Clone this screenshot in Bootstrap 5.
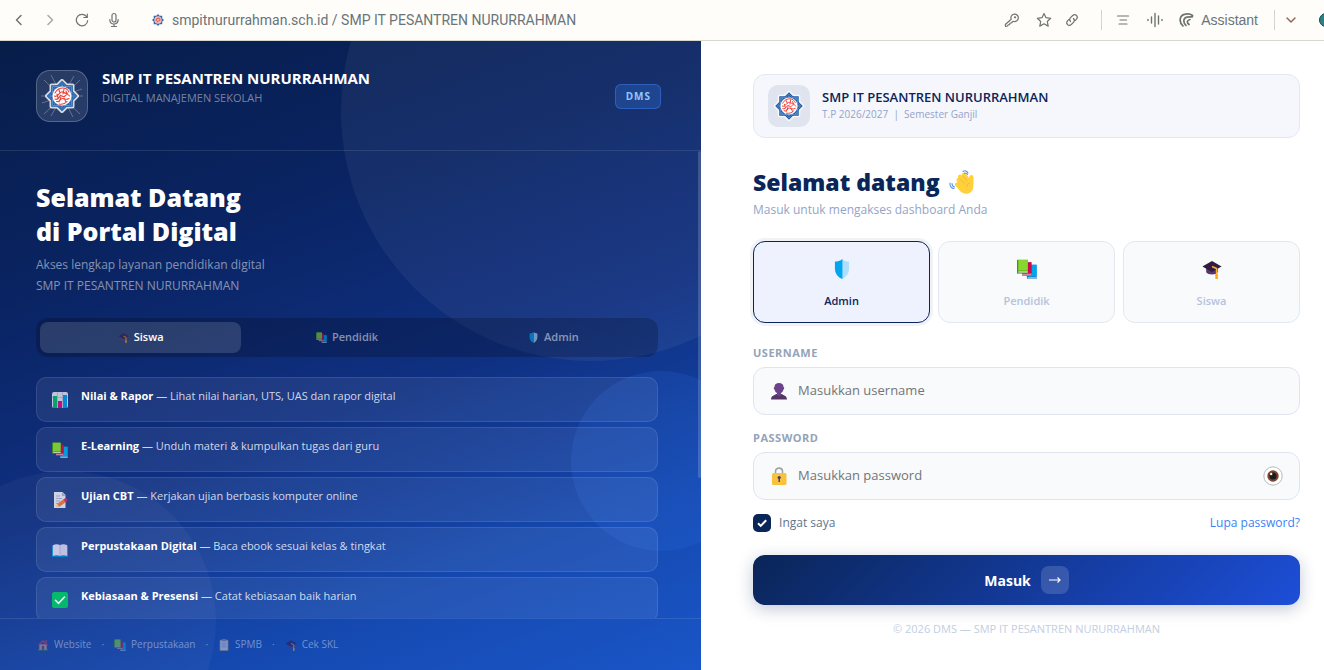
<!DOCTYPE html>
<html lang="id">
<head>
<meta charset="utf-8">
<meta name="viewport" content="width=device-width, initial-scale=1">
<title>SMP IT PESANTREN NURURRAHMAN</title>
<link href="https://cdn.jsdelivr.net/npm/bootstrap@5.3.0/dist/css/bootstrap.min.css" rel="stylesheet">
<style>
  body { font-family: "Open Sans", "Noto Sans", sans-serif; font-size: 13px; color: #0a2558; background: #fff; }
  svg { display: block; flex: none; }
  button { font-family: inherit; }

  /* browser bar */
  .topbar { height: 41px; background: #fffdf9; border-bottom: 1px solid #d9d8d0; color: #68747a; font: 14px/20px Roboto, sans-serif; padding: 0 0 0 11px; overflow: hidden; }
  .topbar svg { fill: none; stroke: #6d7472; stroke-width: 1.2; stroke-linecap: round; stroke-linejoin: round; }
  .bar-btn { border: 0; background: none; padding: 0; color: inherit; }
  .address { border: 0; background: none; padding: 0; color: inherit; outline: 0; min-width: 0; }
  .rule { width: 1px; height: 20px; background: #d5d4cd; }
  .assistant { font-family: "Liberation Sans", sans-serif; }
  .avatar { width: 14px; height: 14px; border-radius: 50%; background: #2b8188; border: 1px solid #16484e; margin-right: -9px; }

  /* left panel */
  .hero { width: 52.95%; background: linear-gradient(160deg, #071d49 0%, #0a2463 30%, #0f2f80 55%, #1549b0 80%, #1a56c8 100%); color: #fff; }
  .bubble { position: absolute; border-radius: 50%; pointer-events: none; }
  .bubble-a { width: 500px; height: 500px; top: -180px; right: -140px; background: rgba(255,255,255,.05); }
  .bubble-b { width: 300px; height: 300px; bottom: -101px; left: -84px; background: rgba(255,255,255,.035); }
  .bubble-c { width: 180px; height: 180px; bottom: 119px; right: -50px; background: rgba(59,130,246,.14); }
  .hero-head { padding: 29px 40px 28px 36px; gap: 14px; border-bottom: 1px solid rgba(255,255,255,.1); }
  .crest { width: 52px; height: 52px; border-radius: 14px; background: rgba(255,255,255,.13); border: 1px solid rgba(255,255,255,.22); }
  .school { font-size: 15px; line-height: 17px; font-weight: 700; }
  .tagline { font-size: 11px; line-height: 21px; color: rgba(255,255,255,.45); }
  .dms { font-size: 10px; line-height: 15px; font-weight: 700; letter-spacing: 1px; color: #93c5fd; padding: 4px 9px 4px 10px; border-radius: 6px; background: rgba(59,130,246,.25); border: 1px solid rgba(59,130,246,.45); }
  .hero-body { padding: 29px 43px 0 36px; }
  .thumb { position: absolute; top: 0; right: 0; width: 3px; height: 70%; background: rgba(255,255,255,.17); border-radius: 2px; }
  .hero-title { font-size: 25px; line-height: 34px; font-weight: 800; margin: 0 0 6px; }
  .hero-sub { font-size: 12px; line-height: 21px; color: rgba(255,255,255,.5); margin: 0 0 22px; }
  .switch { background: rgba(0,0,0,.2); border-radius: 12px; padding: 4px; gap: 5px; }
  .switch button { flex: 1 1 0; height: 31px; border: 0; border-radius: 8px; background: none; color: rgba(255,255,255,.5); font-size: 11px; font-weight: 600; gap: 5px; }
  .switch svg { opacity: .6; }
  .switch .on { background: rgba(255,255,255,.14); color: #fff; }
  .feature { height: 45px; border: 1px solid rgba(255,255,255,.1); background: rgba(255,255,255,.07); border-radius: 10px; padding: 9px 15px; gap: 13px; font-size: 11px; line-height: 18px; color: rgba(255,255,255,.8); }
  .feature b { font-weight: 700; color: #fff; }
  .feature svg { margin-top: 5px; opacity: .9; }
  .hero-foot { height: 52px; border-top: 1px solid rgba(255,255,255,.1); padding: 0 37px; gap: 10px; font-size: 10px; color: rgba(255,255,255,.4); }
  .hero-foot a { color: inherit; text-decoration: none; gap: 5px; }
  .hero-foot svg { opacity: .5; }

  /* right panel */
  .login { padding: 16px 24px 16px 52px; }
  .info { padding: 10px 14px; gap: 12px; border: 1px solid #e2e8f4; border-radius: 12px; background: #f5f7fd; }
  .info-crest { width: 42px; height: 42px; border-radius: 10px; background: #dfe4ef; }
  .info-name { font-size: 13px; line-height: 17px; font-weight: 600; }
  .info-term { font-size: 10px; line-height: 17px; color: #94a3c8; white-space: pre; }
  .hello { font-size: 23px; line-height: 32px; font-weight: 800; margin: 28px 0 2px; gap: 9px; }
  .lead-in { font-size: 12px; line-height: 20px; color: #94a3c8; margin: 0 0 21px; }
  .role { flex: 1 1 0; height: 82px; border: 1px solid #e2e8f0; border-radius: 12px; background: #f8fafc; color: #b4c2de; font-size: 11px; line-height: 16px; font-weight: 600; gap: 14px; padding: 4px 0 0; }
  .role.on { border-color: #0a2558; background: #eef2ff; color: #0a2558; box-shadow: 0 0 0 3px rgba(10,37,88,.06); }
  .caption { font-size: 11px; line-height: 17px; font-weight: 700; letter-spacing: .5px; color: #94a3b8; margin: 0 0 6px; }
  .field { height: 48px; border: 1px solid #dfe5f0; border-radius: 12px; background: #f8fafc; padding: 0 16px; gap: 10px; }
  .field input { flex: 1 1 0; min-width: 0; border: 0; background: none; outline: 0; padding: 0; font-size: 13px; color: #0a2558; }
  .field input::placeholder { color: #757575; opacity: 1; }
  .tick { appearance: none; width: 18px; height: 18px; margin: 0; border-radius: 5px; background: #0a2558 url("data:image/svg+xml,%3Csvg xmlns='http://www.w3.org/2000/svg' viewBox='0 0 18 18'%3E%3Cpath d='M5 9.200l2.700 2.700L13.200 6.200' fill='none' stroke='white' stroke-width='2'/%3E%3C/svg%3E"); }
  .remember { font-size: 12px; line-height: 20px; margin-top: 13px; color: #64748b; }
  .remember a { color: #3b82f6; text-decoration: none; }
  .submit { height: 50px; border: 0; border-radius: 12px; margin-top: 22px; color: #fff; font-size: 14px; font-weight: 700; gap: 10px; background: linear-gradient(135deg, #0a2558, #1d4ed8); box-shadow: 0 4px 16px rgba(10,37,88,.25); }
  .arrow { width: 28px; height: 28px; border-radius: 8px; background: rgba(255,255,255,.15); }
  .legal { font-size: 11px; line-height: 16px; color: #c3cee3; margin: 16px 0 0; }
  @media (max-width: 900px) { .hero { display: none !important; } .login { padding-left: 24px; } }
</style>
</head>
<body class="vh-100 d-flex flex-column overflow-hidden">

<svg width="0" height="0" class="position-absolute" aria-hidden="true">
  <symbol id="crest" viewBox="0 0 40 40">
    <path fill="#fff" stroke="#fff" stroke-width="4" stroke-linejoin="round" opacity=".8" d="M9.500 9.500h21v21h-21zM20 5l15 15-15 15L5 20z"/>
    <path fill="#fff" stroke="#1d5aa6" stroke-width="2.600" d="M20 6.500 33.500 20 20 33.500 6.500 20z"/>
    <path fill="none" stroke="#1d5aa6" stroke-width="2.600" d="M10.500 10.500h19v19h-19z"/>
    <path fill="none" stroke="#8fb6df" stroke-width=".5" d="M20 6.500 33.500 20 20 33.500 6.500 20zM10.500 10.500h19v19h-19z"/>
    <circle cx="20" cy="20" r="9.500" fill="#fff"/>
    <g fill="none" stroke="#ee4038" stroke-width="1.100" stroke-linecap="round">
      <path d="M13 17c2-4 5-5 8-5s5 2 6 4M12.500 20c3 2 4-3 7-4s3 3 6 1M13 23c2 1 4-1 5-3s3 2 5 0 3-2 4.500 0M14.500 25.500c3 1 4-3 6-3s3 2 6.500 0M17 28c3 .5 6 0 8-2.500M17 14l1 3M22 13l-1 5M24 15l1 3M19 21l-2 5M22 22l2 4M15 18l1 4"/>
    </g>
  </symbol>
  <symbol id="cap" viewBox="0 0 24 24">
    <path fill="#5b3570" d="M5 10h14v6c-2.500 3.500-11.500 3.500-14 0z"/>
    <path fill="#321b41" d="M12 2.500 23.500 9 12 15.500.5 9z"/>
    <path d="M12 9l5.500 2.500V22" fill="none" stroke="#ffb02e" stroke-width="1.800"/><path fill="#fcaa20" d="M16 18h3v6h-3z"/>
  </symbol>
  <symbol id="books" viewBox="0 0 24 24">
    <path fill="#0074ba" d="M11 7h12.500v17H12z"/><path fill="#00a6ed" d="M14 7h9.500v14H14z"/><path fill="#83b7d5" d="M12.500 21.500h11V24h-11z"/>
    <path fill="#9c2258" d="M6 4h11v16H6z"/><path fill="#ca0b4a" d="M8 4h9.500v13H8z"/><path fill="#d2879f" d="M6 17.500h11V20H6z"/>
    <path fill="#44911b" d="M0 1h13v16.500H0z"/><path fill="#86d72f" d="M1.500 1H13v13H1.500z"/><path fill="#dce9de" d="M1.500 14.800H13v1.500H1.500z"/>
  </symbol>
  <symbol id="shield" viewBox="0 0 24 24">
    <path fill="#b0deff" d="M12 0c2.500 2.500 5.500 3 8.500 3v8c0 6-3 10.500-8.500 13z"/><path fill="#00a6ed" d="M12.500 0C10 2.500 6.500 3 3.500 3v8c0 6 3 10.500 9 13z"/>
  </symbol>
  <symbol id="chart" viewBox="0 0 16 16">
    <rect width="16" height="16" rx="2" fill="#d3d3e4"/><path stroke="#a6a6c2" stroke-width=".7" d="M0 5.500h16M5.500 0v16M10.500 0v16"/>
    <path fill="#00b26b" d="M1 4h4v12H1z"/><path fill="#ca0b8a" d="M6 9h4v7H6z"/><path fill="#0093e0" d="M11 3h4v13h-4z"/>
  </symbol>
  <symbol id="memo" viewBox="0 0 16 16">
    <path fill="#e1e2f0" d="M2 0h8.500l3 3v13H2z"/><path fill="#a9a9c6" d="M10 0v4h3.500z"/><path stroke="#a9a9c6" d="M4 4h4M4 6.500h6M4 9h4M4 11.500h2"/>
    <path stroke="#e87a38" stroke-width="3.400" d="M6 13.500 13 8.500"/><path stroke="#d82a68" stroke-width="3.400" d="m12.500 8.800 2.300-1.800"/><path fill="#fbc86b" d="m5 11.500 2 3L4 15z"/>
  </symbol>
  <symbol id="open-book" viewBox="0 0 16 16">
    <path fill="#0084ce" d="M0 4h16v11H0z"/><path fill="#d8d6ee" d="M.8 3.200C3 2 6 2 8 3v11c-2-1-5-1-7.200 0z"/><path fill="#cfcde9" d="M15.200 3.200C13 2 10 2 8 3v11c2-1 5-1 7.200 0z"/><path stroke="#a9a7ca" stroke-width=".8" d="M8 3v11"/>
  </symbol>
  <symbol id="done" viewBox="0 0 16 16">
    <rect width="16" height="16" rx="2" fill="#00c567"/><path fill="none" stroke="#fff" stroke-width="1.600" stroke-linecap="round" d="m3.500 8.300 3 3 6-6.300"/>
  </symbol>
  <symbol id="home" viewBox="0 0 16 16">
    <path fill="#3d8b3a" d="M1 13.500h14V15.500H1z"/><path fill="#d8a79a" d="M3 7h10v7.500H3z"/><path fill="#d93f55" d="M8 1 1 8l1.500 1L8 4l5.500 5L15 8z"/><path fill="#d93f55" d="M11 1.500h2.500v4L11 3z"/><path fill="#7b4b52" d="M6.500 9h3v5.500h-3z"/>
  </symbol>
  <symbol id="clip" viewBox="0 0 16 16">
    <path fill="#a5805f" d="M2 1h12v15H2z"/><path fill="#e4e4f2" d="M3 2h10v13H3z"/><path fill="#9494ad" d="M5.500 0h5v3h-5z"/><path stroke="#a6a6c2" d="M5 5.500h6M5 8h6M5 10.500h6"/>
  </symbol>
</svg>

<header class="topbar d-flex align-items-center flex-shrink-0">
  <button class="bar-btn" aria-label="Kembali"><svg width="16" height="16"><path stroke-width="1.500" d="M10 3.500 5.500 8l4.500 4.500"/></svg></button>
  <button class="bar-btn" style="margin-left:15px" aria-label="Maju"><svg width="16" height="16" opacity=".6"><path stroke-width="1.500" d="M6 3.500 10.500 8 6 12.500"/></svg></button>
  <button class="bar-btn" style="margin-left:16px" aria-label="Muat ulang"><svg width="16" height="16"><path d="M12.800 5A5.700 5.700 0 1 0 13.700 8.500M13.300 2v3.500H9.800"/></svg></button>
  <button class="bar-btn" style="margin-left:16px" aria-label="Suara"><svg width="16" height="16"><rect x="6" y="1.500" width="4" height="8.500" rx="2"/><path d="M3.800 7.500c0 6 8.400 6 8.400 0M8 12v2.500M5.500 14.500h5"/></svg></button>
  <svg width="12" height="12" viewBox="0 0 12 12" style="margin-left:30px"><path stroke="none" fill="#2b69b0" d="M6 0 7.500 1.700 10.200 1.700 10.300 4.400 12 6 10.300 7.600 10.200 10.300 7.600 10.300 6 12 4.400 10.300 1.700 10.300 1.700 7.600 0 6 1.700 4.400 1.700 1.700 4.400 1.700z"/><circle cx="6" cy="6" r="3.700" fill="#f4c3be" stroke="none"/><path stroke="#e85c52" d="M4 6.500C5 3 7 4 8 5M5 8c1-2 2 0 3-2"/></svg>
  <input class="address flex-grow-1" style="margin-left:8px" aria-label="Alamat" readonly value="smpitnururrahman.sch.id / SMP IT PESANTREN NURURRAHMAN">
  <button class="bar-btn" aria-label="Kata sandi"><svg width="16" height="16"><path d="M7.200 7.300a3.700 3.700 0 1 1 2 2L7.500 10.800 6 11l-.3 1.500-1.500.3L3.500 14l-2 .300-.2-1.800z"/><circle cx="11" cy="5.300" r=".5"/></svg></button>
  <button class="bar-btn ms-3" aria-label="Favorit"><svg width="16" height="16"><path d="m8 1.500 2 4.200 4.700.6-3.400 3.200.9 4.600L8 11.800l-4.200 2.300.9-4.600L1.300 6.300 6 5.700z"/></svg></button>
  <button class="bar-btn" style="margin-left:12px" aria-label="Salin tautan"><svg width="16" height="16"><path d="M6.500 9.500c-1.500-1.500-1-2.800 0-3.800l2.200-2.200c2.800-2.400 6 .8 3.800 3.600l-1.200 1.200M9.500 6.500c1.500 1.500 1 2.800 0 3.800l-2.200 2.200c-2.800 2.400-6-.8-3.800-3.600l1.200-1.200"/></svg></button>
  <span class="rule" style="margin-left:21px"></span>
  <button class="bar-btn" style="margin-left:13px" aria-label="Mode baca"><svg width="16" height="16"><path d="M2.500 4h11M5 8h6.500M4 12h8"/></svg></button>
  <button class="bar-btn ms-3" aria-label="Baca nyaring"><svg width="16" height="16"><path stroke-width="1.400" d="M1 7.500v1M4.500 5v6M8 1.500v13M11.500 4v8M15 7.500v1"/></svg></button>
  <button class="bar-btn assistant d-flex align-items-center ms-3" style="gap:6px"><svg width="16" height="16"><path stroke-width="1.700" d="M4 14C-1 9 1 3 6.500 2.200c2.500-.5 5-.2 7 1.300M7 13.500C3.500 10 4.500 6 8 5.200c2-.5 4 0 5.500-.500M10 12.500C7.500 10.500 8 8 11 7.500"/></svg>Assistant</button>
  <span class="rule" style="margin-left:16px"></span>
  <button class="bar-btn" style="margin-left:8px" aria-label="Menu"><svg width="16" height="16"><path stroke="#8b5f50" stroke-width="1.400" d="M4 6l4 4 4-4"/></svg></button>
  <span class="avatar flex-shrink-0" style="margin-left:20px"></span>
</header>

<main class="d-flex flex-grow-1" style="min-height:0">
  <section class="hero d-flex flex-column flex-shrink-0 position-relative overflow-hidden">
    <span class="bubble bubble-a"></span><span class="bubble bubble-b"></span><span class="bubble bubble-c"></span>

    <div class="hero-head d-flex flex-shrink-0 position-relative">
      <div class="crest d-flex align-items-center justify-content-center">
        <svg width="46" height="46" viewBox="0 0 46 46"><path stroke="#fff" stroke-width=".7" opacity=".4" d="M5 7l36 34M41 7 5 41M12 2l22 42M35 3 12 43M2 23h42M3 30l40-14"/><use href="#crest" x="3" y="3" width="40" height="40"/></svg>
      </div>
      <div>
        <div class="school">SMP IT PESANTREN NURURRAHMAN</div>
        <div class="tagline">DIGITAL MANAJEMEN SEKOLAH</div>
      </div>
      <span class="dms ms-auto align-self-center">DMS</span>
    </div>

    <div class="hero-body flex-grow-1 position-relative overflow-hidden" style="flex-basis:0">
      <span class="thumb"></span>
      <h1 class="hero-title">Selamat Datang<br>di Portal Digital</h1>
      <p class="hero-sub">Akses lengkap layanan pendidikan digital<br>SMP IT PESANTREN NURURRAHMAN</p>
      <div class="switch d-flex">
        <button class="on d-flex align-items-center justify-content-center"><svg width="11" height="11"><use href="#cap"/></svg>Siswa</button>
        <button class="d-flex align-items-center justify-content-center"><svg width="11" height="11"><use href="#books"/></svg>Pendidik</button>
        <button class="d-flex align-items-center justify-content-center"><svg width="11" height="11"><use href="#shield"/></svg>Admin</button>
      </div>
      <div class="d-flex flex-column" style="gap:5px;margin-top:20px">
        <div class="feature d-flex"><svg width="16" height="16"><use href="#chart"/></svg><span><b>Nilai &amp; Rapor</b> — Lihat nilai harian, UTS, UAS dan rapor digital</span></div>
        <div class="feature d-flex"><svg width="16" height="16"><use href="#books"/></svg><span><b>E-Learning</b> — Unduh materi &amp; kumpulkan tugas dari guru</span></div>
        <div class="feature d-flex"><svg width="16" height="16"><use href="#memo"/></svg><span><b>Ujian CBT</b> — Kerjakan ujian berbasis komputer online</span></div>
        <div class="feature d-flex"><svg width="16" height="16"><use href="#open-book"/></svg><span><b>Perpustakaan Digital</b> — Baca ebook sesuai kelas &amp; tingkat</span></div>
        <div class="feature d-flex"><svg width="16" height="16"><use href="#done"/></svg><span><b>Kebiasaan &amp; Presensi</b> — Catat kebiasaan baik harian</span></div>
      </div>
    </div>

    <nav class="hero-foot d-flex align-items-center flex-shrink-0 position-relative">
      <a href="#" class="d-flex align-items-center"><svg width="12" height="12"><use href="#home"/></svg>Website</a><span>·</span>
      <a href="#" class="d-flex align-items-center"><svg width="12" height="12"><use href="#books"/></svg>Perpustakaan</a><span>·</span>
      <a href="#" class="d-flex align-items-center"><svg width="12" height="12"><use href="#clip"/></svg>SPMB</a><span>·</span>
      <a href="#" class="d-flex align-items-center"><svg width="12" height="12"><use href="#cap"/></svg>Cek SKL</a>
    </nav>
  </section>

  <section class="login d-flex flex-column flex-grow-1 overflow-auto">
    <form class="my-auto" onsubmit="return false">
      <div class="info d-flex align-items-center">
        <div class="info-crest d-flex align-items-center justify-content-center"><svg width="36" height="36"><use href="#crest"/></svg></div>
        <div>
          <div class="info-name">SMP IT PESANTREN NURURRAHMAN</div>
          <div class="info-term">T.P 2026/2027  |  Semester Ganjil</div>
        </div>
      </div>

      <h2 class="hello d-flex align-items-center">Selamat datang
        <svg width="26" height="26" viewBox="0 0 26 26">
          <path fill="none" stroke="#ffd03b" stroke-width="4" stroke-linecap="round" d="m9.500 11 5 5M11 7.500l6 6M15 5.500l5 7M22.300 8v7"/>
          <path fill="#ffd03b" d="m8.500 13 8-5.500 5 2L24.300 8v9c0 9-10 10-14 4l-4-4.500c-1-2 .5-3.500 2-3z"/>
          <path fill="none" stroke="#f3a93c" stroke-width=".7" d="m10.500 9.500 5 5M13.500 6.500l5 6M20.500 14c-2 1-3 2-2.500 4"/>
          <path fill="none" stroke="#5b95e8" stroke-width="1.100" stroke-linecap="round" d="M14 2.500c2-1.500 4-.5 5 1.500M15.500 4.300c1.500-.7 2.500.2 3 1.200M1 14c-.5 3 1.500 5.500 4 5.500M3 14.500c0 2 1 3 2.500 3.500"/>
        </svg>
      </h2>
      <p class="lead-in">Masuk untuk mengakses dashboard Anda</p>

      <div class="d-flex gap-2">
        <button type="button" class="role on d-flex flex-column align-items-center justify-content-center"><svg width="20" height="20"><use href="#shield"/></svg>Admin</button>
        <button type="button" class="role d-flex flex-column align-items-center justify-content-center"><svg width="22" height="20"><use href="#books"/></svg>Pendidik</button>
        <button type="button" class="role d-flex flex-column align-items-center justify-content-center"><svg width="20" height="20"><use href="#cap"/></svg>Siswa</button>
      </div>

      <div style="margin-top:21px">
        <label class="caption d-block" for="user">USERNAME</label>
        <div class="field d-flex align-items-center">
          <svg width="18" height="18"><path fill="#533566" d="M1 17.500c0-4 4-4.500 5.500-5.500h5c1.500 1 5.500 1.500 5.500 5.500z"/><path fill="#6b438b" d="M4.500 5C4.500 2 6.500 1 9 1s4.500 1 4.500 4c1 0 1 2.500-.2 2.700-.4 1.800-1.300 2.800-2.300 3.300V13L9 14.500 7 13v-2c-1-.5-1.900-1.500-2.300-3.300C3.500 7.500 3.500 5 4.500 5z"/></svg>
          <input id="user" type="text" placeholder="Masukkan username">
        </div>
      </div>
      <div style="margin-top:14px">
        <label class="caption d-block" for="pass">PASSWORD</label>
        <div class="field d-flex align-items-center">
          <svg width="18" height="18"><path fill="none" stroke="#a0a3a8" stroke-width="1.600" d="M5.500 7V4.500c0-4.500 7-4.500 7 0V7"/><rect x="2" y="6" width="14.500" height="12" rx="1.500" fill="#f9c23c"/><circle cx="9.200" cy="10.500" r="1.600" fill="#433b6b"/><path stroke="#433b6b" stroke-width="1.400" d="M9.200 11v4"/></svg>
          <input id="pass" type="password" placeholder="Masukkan password">
          <button type="button" class="bar-btn" aria-label="Tampilkan password"><svg width="20" height="20"><circle cx="10" cy="10" r="9.200" fill="#fff" stroke="#b9b9b9"/><circle cx="10" cy="10" r="5.700" fill="#7d4533"/><circle cx="10" cy="10" r="3.500" fill="#1c1c1c"/><circle cx="8.200" cy="8" r="1.200" fill="#fff"/></svg></button>
        </div>
      </div>

      <div class="remember d-flex align-items-center justify-content-between">
        <label class="d-flex align-items-center gap-2"><input class="tick" type="checkbox" checked>Ingat saya</label>
        <a href="#">Lupa password?</a>
      </div>

      <button class="submit w-100 d-flex align-items-center justify-content-center">Masuk
        <span class="arrow d-flex align-items-center justify-content-center"><svg width="12" height="10" fill="none" stroke="#fff" stroke-width="1.200"><path d="M0 5h11M8.500 2.500 11 5 8.500 7.500"/></svg></span>
      </button>
      <p class="legal text-center">© 2026 DMS — SMP IT PESANTREN NURURRAHMAN</p>
    </form>
  </section>
</main>
<script src="https://cdn.jsdelivr.net/npm/bootstrap@5.3.0/dist/js/bootstrap.bundle.min.js"></script>
</body>
</html>
